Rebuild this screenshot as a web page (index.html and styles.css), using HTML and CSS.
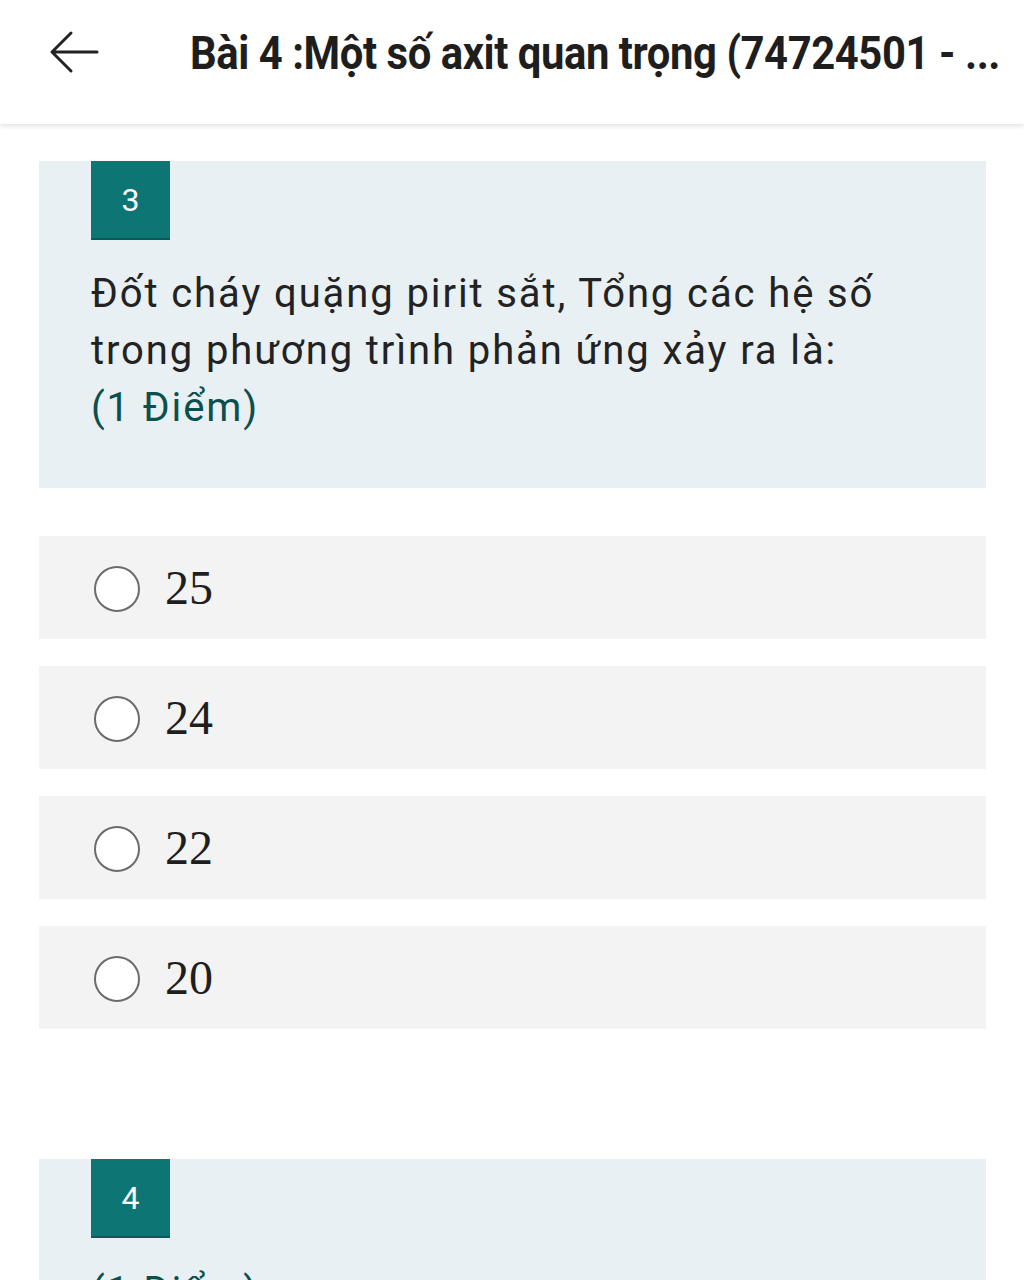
FILE: index.html
```html
<!DOCTYPE html>
<html lang="vi">
<head>
<meta charset="utf-8">
<link rel="stylesheet" href="styles.css">
</head>
<body>
<header class="topbar">
  <svg class="back" width="50" height="44" viewBox="0 0 50 44"><path d="M22 3 L3 22 L22 41 M3 22 H48" fill="none" stroke="#222" stroke-width="3" stroke-linecap="round" stroke-linejoin="round"/></svg>
  <h1 class="title">Bài 4 :Một số axit quan trọng (74724501 - ...</h1>
</header>
<main class="content">
  <section class="qcard">
    <div class="badge">3</div>
    <p class="qtext">Đốt cháy quặng pirit sắt, Tổng các hệ số<br>trong phương trình phản ứng xảy ra là:<br><span class="points">(1 Điểm)</span></p>
  </section>
  <div class="options">
    <label class="opt"><span class="radio"></span><span class="otext">25</span></label>
    <label class="opt"><span class="radio"></span><span class="otext">24</span></label>
    <label class="opt"><span class="radio"></span><span class="otext">22</span></label>
    <label class="opt"><span class="radio"></span><span class="otext">20</span></label>
  </div>
  <section class="qcard next">
    <div class="badge">4</div>
    <p class="qtext"><span class="points">(1 Điểm)</span></p>
  </section>
</main>
</body>
</html>
```
FILE: styles.css
```css
html, body { margin: 0; padding: 0; background: #fff; }
body { width: 1024px; height: 1280px; overflow: hidden; font-family: Roboto, "Noto Sans", sans-serif; }
.topbar {
  height: 124px;
  display: flex;
  align-items: center;
  background: #fff;
  box-shadow: 0 2px 5px rgba(0,0,0,0.12);
  position: relative;
  z-index: 1;
}
.back { margin-left: 49px; margin-top: -20px; flex: none; }
.title {
  margin: -20px 0 0 91px;
  font-family: Roboto, sans-serif;
  font-weight: 700;
  font-size: 47px;
  letter-spacing: -0.5px;
  color: #1e1e1e;
  white-space: nowrap;
  transform: scaleX(0.89);
  transform-origin: left center;
}
.content { padding: 37px 38px 0 39px; }
.qcard {
  background: #e8f0f3;
  padding: 0 52px 0 52px;
  height: 327px;
  box-sizing: border-box;
}
.badge {
  width: 79px;
  height: 77px;
  background: #0e7575;
  border-bottom: 2px solid #0a5a5a;
  color: #fff;
  font-size: 32px;
  display: flex;
  align-items: center;
  justify-content: center;
}
.qtext {
  margin: 25px 0 0;
  font-family: Roboto, "Noto Sans", sans-serif;
  font-size: 40px;
  letter-spacing: 1.9px;
  line-height: 57px;
  color: #222;
  white-space: nowrap;
}
.points { color: #0b4f4f; }
.options { display: flex; flex-direction: column; gap: 27px; margin-top: 48px; }
.opt {
  height: 103px;
  background: #f3f3f3;
  display: flex;
  align-items: center;
}
.radio {
  width: 42px;
  height: 42px;
  border: 2px solid #6b6b6b;
  border-radius: 50%;
  background: #fff;
  margin-left: 55px;
  margin-top: 2px;
  flex: none;
}
.otext {
  margin-left: 25px;
  font-family: "Liberation Serif", serif;
  font-size: 48px;
  color: #1e1e1e;
}
.qcard.next { margin-top: 130px; }
```
